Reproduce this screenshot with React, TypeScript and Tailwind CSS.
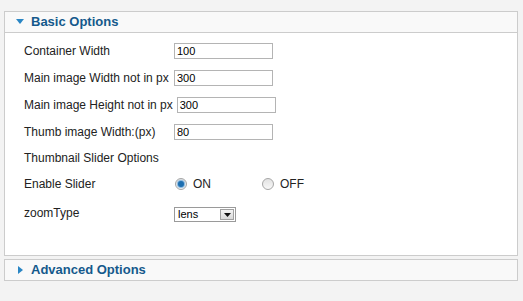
function Row({ label, children, className = "h-[27px]" }: { label: string; children?: React.ReactNode; className?: string }) {
  return (
    <div className={`flex items-center ${className}`}>
      <span className="min-w-[150px] pr-[4px] whitespace-nowrap">{label}</span>
      {children}
    </div>
  );
}

function TextBox({ value }: { value: string }) {
  return (
    <div className="w-[99px] h-[16px] border border-[#b4b4b4] bg-white pl-[2px] text-[11px] leading-[14px] text-black">
      {value}
    </div>
  );
}

function Radio({ checked, label }: { checked?: boolean; label: string }) {
  return (
    <div className="flex items-center gap-[6px]">
      <span className="w-[12px] h-[12px] rounded-full border border-[#a6a6a6] bg-gradient-to-b from-[#e2e2e2] to-[#f8f8f8] flex items-center justify-center">
        {checked && <span className="w-[6px] h-[6px] rounded-full bg-[#1e6fb0] shadow-[0_0_1px_1px_#7fb3de]" />}
      </span>
      <span>{label}</span>
    </div>
  );
}

export default function App() {
  return (
    <div className="w-[523px] h-[301px] bg-[#f3f3f3] pt-[11px] pl-[4px] pr-[5px] font-['Liberation_Sans',Arial,sans-serif] text-[12px] text-[#222]">
      <div className="border border-[#cccccc] bg-white h-[245px] flex flex-col">
        <div className="h-[21px] bg-[#f9f9f9] border-b border-[#cccccc] flex items-center pl-[11px] gap-[7px]">
          <svg width="8" height="6" viewBox="0 0 8 6">
            <path d="M0 0 L8 0 L4 5 Z" fill="#2a86c4" />
          </svg>
          <span className="text-[13px] font-bold text-[#15598c]">Basic Options</span>
        </div>
        <div className="pl-[19px] pt-[4px]">
          <Row label="Container Width"><TextBox value="100" /></Row>
          <Row label="Main image Width not in px"><TextBox value="300" /></Row>
          <Row label="Main image Height not in px"><TextBox value="300" /></Row>
          <Row label="Thumb image Width:(px)"><TextBox value="80" /></Row>
          <Row label="Thumbnail Slider Options" className="h-[26px]" />
          <Row label="Enable Slider" className="h-[26px]">
            <div className="flex gap-[51px] pl-[1px]">
              <Radio checked label="ON" />
              <Radio label="OFF" />
            </div>
          </Row>
          <Row label="zoomType" className="h-[32px]">
            <div className="w-[62px] h-[15px] mt-[3px] border border-[#9a9a9a] bg-white flex items-center justify-between text-[11px] text-black">
              <span className="pl-[3px] leading-[13px]">lens</span>
              <span className="w-[14px] h-[11px] mr-[1px] border border-[#a0a0a0] bg-gradient-to-b from-[#f4f4f4] to-[#d9d9d9] flex items-center justify-center">
                <svg width="7" height="4" viewBox="0 0 7 4">
                  <path d="M0 0 L7 0 L3.5 4 Z" fill="#111" />
                </svg>
              </span>
            </div>
          </Row>
        </div>
      </div>
      <div className="mt-[3px] h-[22px] border border-[#cccccc] bg-[#f9f9f9] flex items-center pl-[13px] gap-[7px]">
        <svg width="6" height="8" viewBox="0 0 6 8">
          <path d="M0 0 L5 4 L0 8 Z" fill="#2a86c4" />
        </svg>
        <span className="text-[13px] font-bold text-[#15598c]">Advanced Options</span>
      </div>
    </div>
  );
}
